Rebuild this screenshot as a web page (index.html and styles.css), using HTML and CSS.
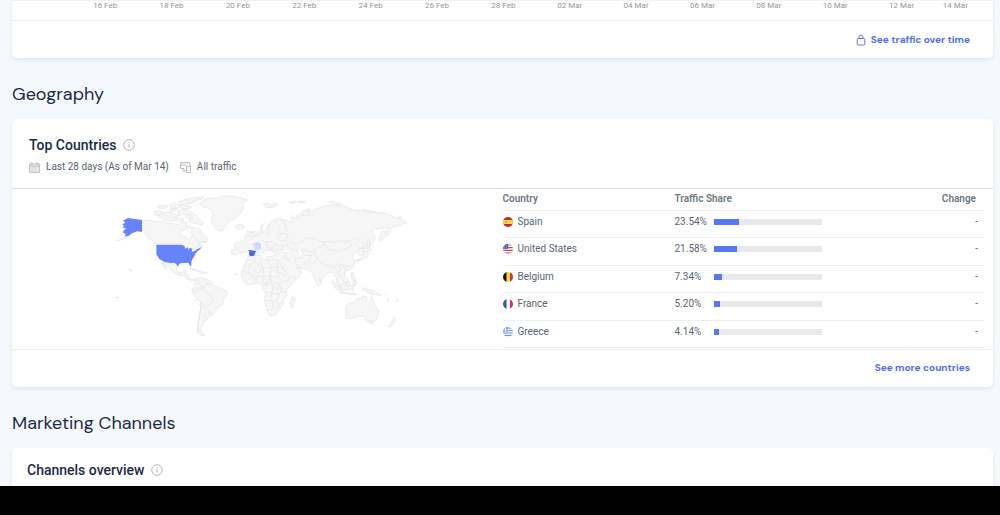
FILE: index.html
```html
<!DOCTYPE html>
<html lang="en">
<head>
<meta charset="utf-8">
<meta name="viewport" content="width=device-width, initial-scale=1">
<title>Website traffic</title>
<link rel="stylesheet" href="styles.css">
</head>
<body>
<svg class="defs" width="0" height="0" aria-hidden="true">
  <symbol id="info" viewBox="0 0 12 12"><circle cx="6" cy="6" r="5.3" fill="none" stroke="#b1b5bb" stroke-width="1"/><path d="M6 5.2v3.4M6 3.2v1" stroke="#b1b5bb" stroke-width="1.1"/></symbol>
  <clipPath id="round"><circle cx="5" cy="5" r="5"/></clipPath>
</svg>
<main class="page">
  <section class="card card-first">
    <div class="axis">
      <span>16 Feb</span><span>18 Feb</span><span>20 Feb</span><span>22 Feb</span><span>24 Feb</span><span>26 Feb</span><span>28 Feb</span><span>02 Mar</span><span>04 Mar</span><span>06 Mar</span><span>08 Mar</span><span>10 Mar</span><span>12 Mar</span><span>14 Mar</span>
    </div>
    <footer class="card-footer">
      <a class="more" href="#traffic">
        <svg width="10" height="12" viewBox="0 0 10 12" fill="none" stroke="#6678dc" stroke-width="1"><rect x="1.2" y="4.5" width="7.6" height="6.5" rx="1"/><path d="M3 4.5V3a2 2 0 0 1 4 0v1.500"/></svg>
        See traffic over time
      </a>
    </footer>
  </section>

  <h2 class="section-title">Geography</h2>
  <section class="card">
    <header class="card-header">
      <h3 class="card-title">Top Countries <svg class="info"><use href="#info"/></svg></h3>
      <div class="meta">
        <span class="meta-item"><svg width="11" height="11" viewBox="0 0 11 11" fill="none" stroke="#b5b9bf"><path fill="#f0f1f3" d="M.7 2h9.600v8.300H.7z"/><path d="M.7 4.200h9.600M3 .3v2.400M8 .3v2.400"/><path d="M2.500 6h6M2.500 8h6" stroke-dasharray="1 1"/></svg>Last 28 days (As of Mar 14)</span>
        <span class="meta-item"><svg width="11" height="11" viewBox="0 0 11 11" fill="none" stroke="#b5b9bf"><path d="M10 4V.7H.6v5.800H4M.6 3h6M2.500 9h3M4 6.500V9M6.500 4.500h4v6h-4z"/></svg>All traffic</span>
      </div>
    </header>
    <div class="geo">
      <div class="map-wrap">
        <svg class="map" viewBox="0 0 900 450" role="img" aria-label="World map of traffic share">
          <g class="land">
            <path d="M97 90l23 2 20 4 16-2 12 6 18 0 20 4 12-8 14 2-6 8 14 4-8 6-18 4-7 8 3 7 18 8 7 8 6-6-2-12 8-12-4-8 10-2 8 8 8-4 9 15 6 9 10 7-4 8-14 4-9 4 14 5-5 6-11-3-10 5-13 5-10-6-10-9-11-4H139l-10-8-6-8-7-9-6-8-13-8z"/>
            <path d="M278 32l18-8 16 3 20-7 33-3 26 6 21 7-15 8 4 12-6 16-8 7-4 8-15 8-14 6-8 12-10 17-13-4-11-13-7-12-1-12 5-8-6-18-22-6-12-8z"/>
            <path d="M205 62l22-5 9 7 15 6 8 8 9 9 13 11-5 8-17-5-16-3-6-8 12-5-14-11-18-2-11 6z"/>
            <path d="M153 72l18-6 18 3 15 8-1 12-17 5-21-2-10-9-10-3z"/>
            <path d="M132 65l16-4 9 5-9 11-15-2zM144 49l18-5 12 5-10 6-18 0zM179 45l14-7 9 5 12 3-10 8-17 2zM206 36l22-9 31-5 23-1-9 7-21 4-11 8-24 4-10-3zM210 48l17-3 19 6-13 5-20-1zM178 57l22-3 2 6-19 4zM229 73l13 3-2 10-12-4zM212 84l10 2-2 8-12-1z"/>
            <path d="M157 216l15 2 11 2 8 4 10 7-2 9 5 9 11-2 6-6 7 1-4 9 11 3-1 9 11 6 14-3 6 1-7 6-14-1-12-6-12-8-17-4-13-7-11-13-10-9-11-6 11 16 1 5-11-12z"/>
            <path d="M240 235l16 3 13 6-15-2-13-5zM270 245l16 1-2 4-14-1zM287 246h4v3h-4z"/>
            <path d="M256 271l8-8 9 1 18 4 14 9 10 11 17 8 16 5 5 8-7 11-5 8-3 17-12 5-9 8-5 11-8 9-8 2-5 10-9 2-2 8-4 8-3 12 5 10 6 7-11-1-11-9 1-22 5-23 4-26 0-19-14-14-10-15-2-10 7-11z"/>
            <path d="M377 108l9-5 15 3 4 6-13 6-14-3zM423 125l8 4 4 10 8 8-3 6-16 2 6-7-5-7-4-7zM410 142l10-3 4 8-7 8-9-3z"/>
            <path d="M457 127l8-3 5-12 9-12 11-9 16-6 14 4 20 8 9-6-8-8 8-7 6 10 14-7 13-4 14-1-4-13 11 4 12-7 24-9 24-4 25-6 11 6 18 10 25 8 21-4 26 7 23 1 22 6 25 10 12 4 12 6 8 5-14 3-5 6-16 2-10 4-5 11-7 12-6 3-2-9 9-16-9-1-13 3-16 0-12 9 10 12-2 14-15 20-14 5-2 12-10 10-6-3-5-10-10 3-4 13 9 11-3 13-13 14-14 6-1 12 9 12-4 12-12-7-5-12-7 3 3 20 8 16-9-4-7-16-3-22-10-13-18 4-13 17-5 17-9 4-8-18-8-21-11-9-17-2-18-6 4 8 12 7-12 16-22 9-8-2-17-35-7-12-9-5-14 4-15-4-6-9 3-8 24-4 5-9-16-8-16 2-5 7-11-1-8 7 2 9-7-3-10-16-2 13-11-11-6-5-7 6-18 1-7 5-11-2-2-13 13-1-5-14 10-7 15-3 9-7-2-10 10-4 6 8 15-1 18-7 6-12-3-10 8-12-9 6-4 14-5 13-11 5-8-10-12 4-7-8z"/>
            <path d="M414 200l22-3 16-2 3 11 19 7 17-5 15 4 9 13 10 20 9 12 22 5-4 13-14 15-10 12 2 14-9 12-3 17-11 14-9 14-16 5-9-13-6-20-4-20 4-15-8-12-2-13-10-5-18 2-15 2-15-12-6-14 2-13 9-20z"/>
            <path d="M548 320l8 4-3 17-7 13-6-5 2-16zM629 264l5 7-3 5-4-6z"/>
            <path d="M459 44l16-5 7 5 16-5 5 6-18 8-16 0zM537 38l22-4-9 7zM564 34h20v4h-20zM558 82l14-16 23-10 7 2-20 12-17 17zM656 35l17-2 11 10 8 7-16-4zM758 62l24 1 14 4-26 2zM865 80l9 2-7 3z"/>
            <path d="M814 126l10-4 4 12-14 20-7-5zM773 147l6 4-1 23 7 5-11 4-3-15zM766 182l9 4-2 13-16 9-14 3 14-10zM741 207l6 4-2 5-5-3zM724 247l7 1-1 14 9 9-7 4-8-11zM731 273l10 5-4 9-9-5zM692 282l11-2 11-7 7 5-8 22-17-1zM665 271l10 8 15 19-3 5-10-7zM689 304l22 4 19 2 9 4-23-1-26-5zM721 287l14-1-8 5 2 11-8-3zM756 293l13 4 18 4 15 9 12 6-18-2-14-1-13-9-13-3z"/>
            <path d="M707 350l9-9 15-4 10-11 12-1 6-7 12 3-2 10 9 7 6-18 6 11 5 15 10 13 1 15-8 16-12 6-16-2-7-14-14-2-19 5-13 3-9-3z"/>
            <path d="M779 393l13 1-5 9-7-4zM852 380l6 9-11 16-11 6 10-17zM832 325l5 6-3 2zM861 328l5 4-4 3zM820 310l10 4M57 237l9 5-6 2zM18 322l7-1v3h-7zM376 250l6 1-2 5z"/>
          </g>
          <path class="borders" d="M263 267l5 18 15 8 6-13 17 3M244 301l15 6 8-14 16 6 8 14 10 5 8 14-8 14-14 3-12-11-10-11-10 5M263 345l12-4 6 13 13 5 9 16M272 350l-3 22-5 24 1 30M290 365l-8 16 8 9M245 130l13 20 18 8 14-1M262 160l12 15M157 69l17 14 10-10M224 27l17 12 20-7M186 82l20 2"/>
          <path class="borders" d="M395 245l22 2 0-19 18-14-2-14M435 214l24 23-16 12-21-18M456 206l-4 13 8 17 22-5-7-18M482 231l21 0-1-23M484 232l-3 24-19 5-21-4-2 18M460 238l2 22-5 16 15 5 9-24 24 4-4-29 22 4M405 256l14-7 16 10-2 20M415 269l12-7M505 261l12 14 18-4 9-12M481 257l3 21 25 2 8-5M459 285h18l7-6 6 13 13 6 6-17M464 309l20-2 6-15M509 282l6 19-8 12-14-2-9-3-1 24h-16M483 331l13 3 10-12 1-10M515 303l15 4M496 334l9 9 13-7M487 332l2 21 11 3 7-13M472 359l10 3 7-9M503 245l16 10 10 5"/>
          <path class="borders" d="M479 101l-3 21-7 15M493 91l11 12 3 17M511 87l14 15 7 24M500 137l13-8 22 5-8 18-15 1-12-15M455 151l15 6 14-3 8 9 20 5 19-3M470 156l1 16 17 4 10-12M481 176l8 12 13-10 12 4 5-16M440 157l17 20M531 165l9-11 15 9 23-9 12-10 25 2 22 10 19-3 17 4 17-7 12 6 26-6 10-7 16 13 12 4-1 10-12 3-9 13M531 165l9 16 11-6 13 9 21-7 9 7 15 2 14-14 11 1 9-15M577 180l4 14 22 3 14-10-7-8M549 193l8 15-4 11 20 12M557 207l20-5M603 197l-6 17-18 9M614 190l9 15-11 16-15 1M615 198l18 22 26 9 11 3M640 157l13 20 32 7 27-9 14-9-13-13M672 237l10-17 16 6 22 2M685 224l8 17-11 4 13 17M698 226l10 17-6 11M530 181l-8 18 18 16M520 199l12 10 14-2M706 276l8 15M785 301v13M738 164l14 13 14-4"/>
          <path class="water" d="M563 181l10-4 5 15-8 7-5-9zM518 180l18-4 9 7-13 4-14 1zM210 127l16-9 11 5 8 9-3 10-13-4-12-3z"/>
          <path class="top" d="M36 103l10-5-7-6 15-8 42 6v36l-14-2-15 5-11 8-14 3 6-7-9-5 3-9 8-3-13-4 6-5zM139 164h76l9 5 1 7 9-4 2 10 2-8 9 2-2 10 10-4 6-5 9-3 4-4-3 8-7 4-7 8-5 10-6 9-2 7 0 14-5-5-4-7-13 1-9 1-6 2-2 9-7-9-6-4-10 1-20-4-14-8-9-14z"/>
          <path class="aleutian" d="M19 152q23-2 41-14M102 127l11 14 6 10"/>
          <path class="spain" d="M414 180l10 1 15 2-4 6-2 8-12 2-4-5 1-9z"/>
          <path class="france" d="M431 160l11-5 12 7-2 14-7 5-11-2-2-10-5-5z"/>
        </svg>
      </div>
      <table class="countries">
        <thead><tr><th class="country">Country</th><th class="share">Traffic Share</th><th class="change">Change</th></tr></thead>
        <tbody>
          <tr><td><span class="place"><svg class="flag" viewBox="0 0 10 10"><g clip-path="url(#round)"><path fill="#c7282c" d="M0 0h10v10H0z"/><path fill="#f9d84b" d="M0 3h10v4H0z"/><path fill="#dda047" d="M2 4h2v2H2z"/></g></svg>Spain</span></td><td><span class="metric"><span>23.54%</span><span class="bar"><span class="fill" style="width:24%"></span></span></span></td><td class="change">-</td></tr>
          <tr><td><span class="place"><svg class="flag" viewBox="0 0 10 10"><g clip-path="url(#round)"><path fill="#fff" d="M0 0h10v10H0z"/><path d="M0 1h10M0 3.700h10M0 6.300h10M0 9h10" stroke="#cc4054" stroke-width="1.200"/><path fill="#4b67b6" d="M0 0h5v5H0z"/><path d="M1 2h4M1 4h4" stroke="#bfcaec" stroke-width=".6" stroke-dasharray="1 1"/></g></svg>United States</span></td><td><span class="metric"><span>21.58%</span><span class="bar"><span class="fill" style="width:22%"></span></span></span></td><td class="change">-</td></tr>
          <tr><td><span class="place"><svg class="flag" viewBox="0 0 10 10"><g clip-path="url(#round)"><path fill="#17181c" d="M0 0h4v10H0z"/><path fill="#fbd64b" d="M3.500 0h3.500v10H3.500z"/><path fill="#cb2e3b" d="M7 0h3v10H7z"/></g></svg>Belgium</span></td><td><span class="metric"><span>7.34%</span><span class="bar"><span class="fill" style="width:8%"></span></span></span></td><td class="change">-</td></tr>
          <tr><td><span class="place"><svg class="flag" viewBox="0 0 10 10"><g clip-path="url(#round)"><path fill="#3b5796" d="M0 0h4v10H0z"/><path fill="#f5f5f8" d="M3.500 0h3.500v10H3.500z"/><path fill="#c83a48" d="M7 0h3v10H7z"/></g></svg>France</span></td><td><span class="metric"><span>5.20%</span><span class="bar"><span class="fill" style="width:6%"></span></span></span></td><td class="change">-</td></tr>
          <tr><td><span class="place"><svg class="flag" viewBox="0 0 10 10"><g clip-path="url(#round)"><path fill="#e9f0fc" d="M0 0h10v10H0z"/><path d="M0 1h10M0 3.500h10M0 6h10M0 8.500h10" stroke="#6e9ae3" stroke-width="1.200"/><path fill="#6e9ae3" d="M0 0h4.500v4.800H0z"/><path d="M2.500 0v4.800M0 2.800h4.500" stroke="#fff" stroke-width=".8"/></g></svg>Greece</span></td><td><span class="metric"><span>4.14%</span><span class="bar"><span class="fill" style="width:5%"></span></span></span></td><td class="change">-</td></tr>
        </tbody>
      </table>
    </div>
    <footer class="card-footer"><a class="more" href="#countries">See more countries</a></footer>
  </section>

  <h2 class="section-title">Marketing Channels</h2>
  <section class="card card-last">
    <h3 class="card-title">Channels overview <svg class="info"><use href="#info"/></svg></h3>
  </section>
</main>
</body>
</html>
```

FILE: styles.css
```css
* { box-sizing: border-box; }
html { background: #000; }
body { margin: 0; background: #000; color: #1c2b45; font-family: Roboto, "Liberation Sans", sans-serif; }
.defs { position: absolute; }
.page { padding: 0 7px 0 12px; background: #f5f8fd; overflow: hidden; }
.card { background: #fff; border-radius: 5px; box-shadow: 0 2px 4px rgba(30, 50, 90, .09); }
.card-first { border-top: 1px solid #eff1f5; border-radius: 0 0 5px 5px; }
.axis { display: grid; grid-template-columns: repeat(13, 66fr) 41fr; height: 19px; padding: 0 17px 0 60px; color: #949698; font-size: 8px; line-height: 10px; text-align: center; white-space: nowrap; }
.card-footer { display: flex; justify-content: flex-end; align-items: center; padding: 0 23px; height: 38px; border-top: 1px solid #eceef1; }
.more { display: flex; align-items: center; gap: 5px; color: #4f70e4; font-family: "DM Sans", Inter, sans-serif; font-size: 10px; font-weight: 700; line-height: 14px; text-decoration: none; }
.section-title { margin: 0; padding: 24px 0 13px; font-family: "DM Sans", Inter, sans-serif; font-size: 18px; font-weight: 400; line-height: 24px; }
.card-header { padding: 16px 17px 13px; border-bottom: 1px solid #d8dbde; }
.card-title { display: flex; align-items: center; gap: 7px; margin: 0; font-size: 14px; font-weight: 500; line-height: 20px; }
.info { width: 12px; height: 12px; }
.meta { display: flex; gap: 11px; margin-top: 4px; color: #596473; font-size: 10px; line-height: 16px; }
.meta-item { display: flex; align-items: center; gap: 6px; }
.geo { display: grid; grid-template-columns: 1fr 1fr; }
.map-wrap { display: flex; justify-content: center; align-items: flex-start; padding: 1px 0 0 6px; }
.map { width: 300px; height: 150px; }
.land { fill: #f6f6f7; stroke: #e2e3e5; stroke-width: 2; stroke-linejoin: round; }
.borders { fill: none; stroke: #e2e3e5; stroke-width: 2; }
.water { fill: #fff; stroke: #e6e7e8; stroke-width: 1; }
.top { fill: #6683fa; }
.aleutian { fill: none; stroke: #d0d3dc; stroke-width: 2; }
.spain { fill: #4868e6; }
.france { fill: #cfdafd; }
.countries { width: calc(100% - 9px); margin-bottom: 1px; border-collapse: collapse; table-layout: fixed; color: #596473; font-size: 10px; line-height: 14px; }
.countries tr { border-bottom: 1px solid #eceef1; }
.countries th { height: 21px; padding: 0; color: #6d7783; font-weight: 600; text-align: left; }
.countries td { height: 27px; padding: 0 0 4px; }
.countries tbody tr:nth-child(even) td { height: 28px; }
.countries td:last-child { padding-right: 6px; }
.countries .country { width: 172px; }
.countries .share { width: 172px; }
.countries .change { text-align: right; }
.countries th.change { padding-right: 8px; }
.place, .metric { display: flex; align-items: center; gap: 5px; }
.flag { width: 10px; height: 10px; }
.metric > :first-child { width: 34px; }
.bar { width: 108px; height: 6px; background: #e8e9ed; }
.fill { display: block; height: 100%; background: #5577f3; }
.card-last { padding: 12px 15px 6px; border-radius: 5px 5px 0 0; }
```
